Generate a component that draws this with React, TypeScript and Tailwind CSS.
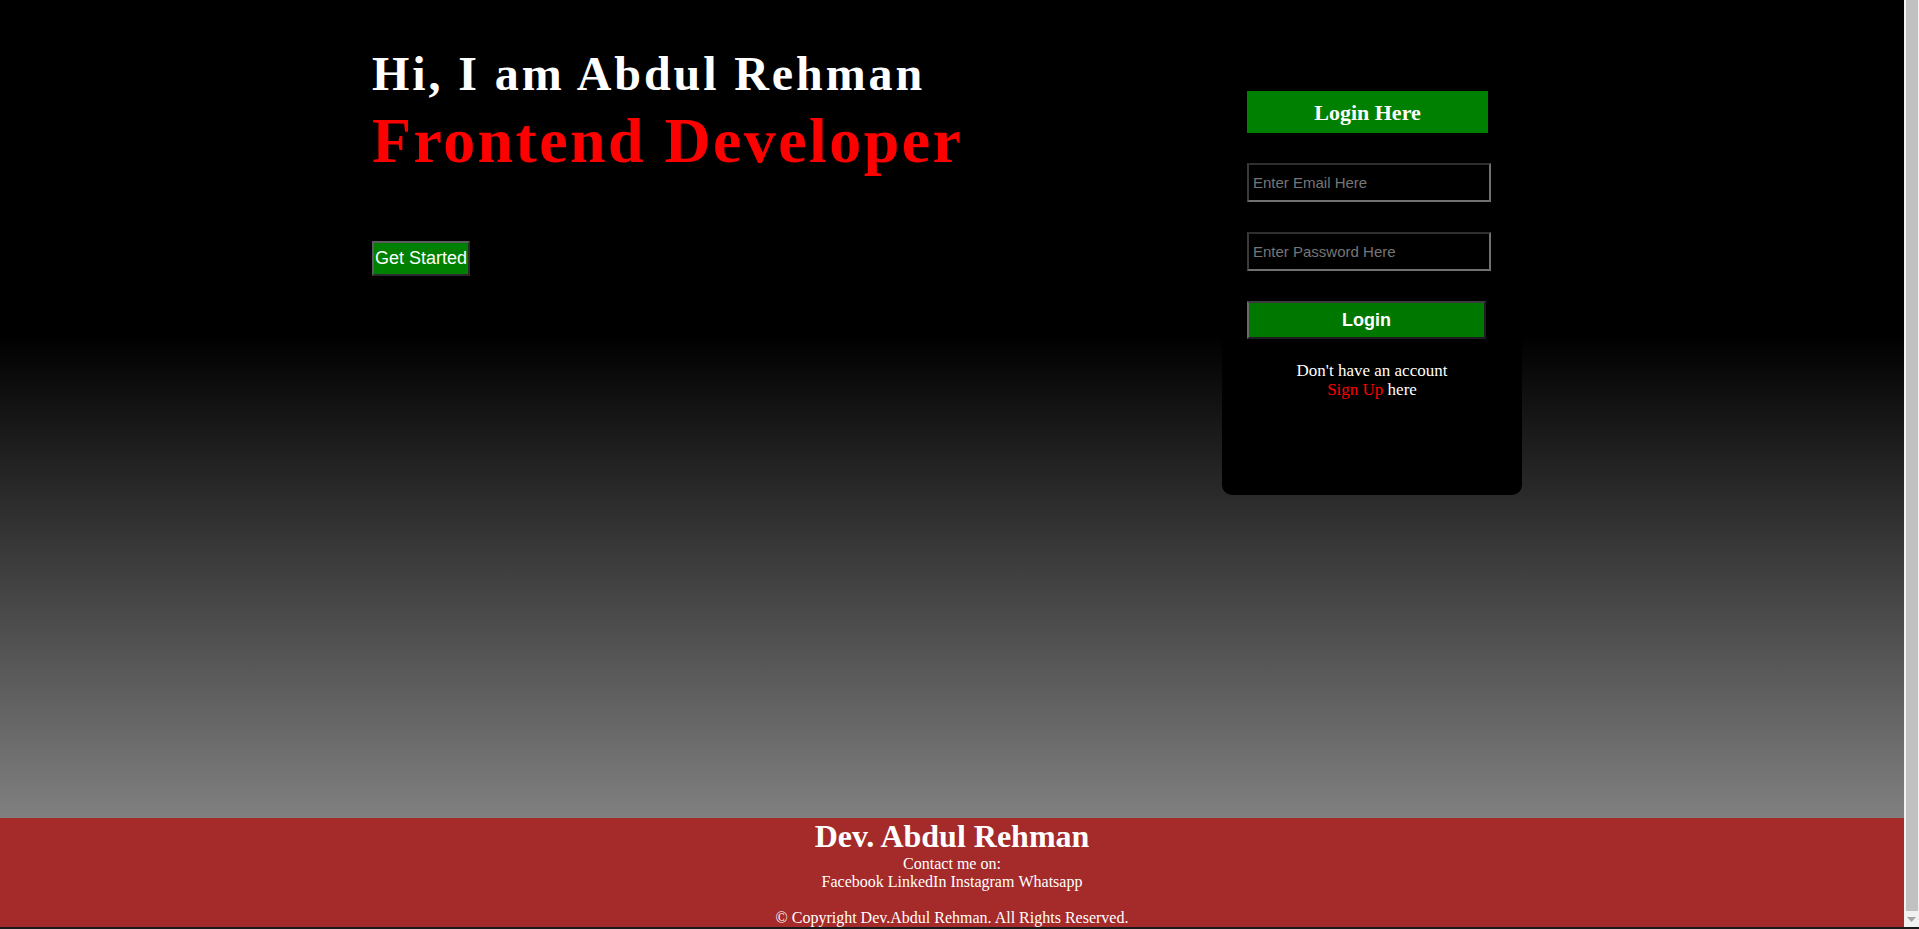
export default function App() {
  return (
    <div className="h-[929px] overflow-hidden flex flex-col bg-[#1a1a1a] font-['Liberation_Serif','Times_New_Roman',serif]">
      <div className="h-[927px] flex">
        <div className="flex-1 overflow-hidden">
          {/* Hero */}
          <section className="h-[818px] bg-[linear-gradient(to_bottom,#000000_41%,#808080_100%)]">
            <div className="w-[1150px] ml-[372px] flex justify-between">
              <div className="pt-[46px]">
                <h1 className="text-[48px] leading-[55px] font-bold text-white tracking-[2.9px]">
                  Hi, I am Abdul Rehman
                </h1>
                <h2 className="mt-[3px] text-[64px] leading-[74px] font-bold text-[#ff0000] tracking-[2.4px]">
                  Frontend Developer
                </h2>
                <button className="mt-[63px] w-[98px] h-[35px] bg-[#008000] border-2 border-t-[#5c5c5c] border-l-[#5c5c5c] border-r-[#2a2a2a] border-b-[#2a2a2a] text-white text-[18px] font-['Liberation_Sans',Arial,sans-serif] flex items-center justify-center">
                  Get Started
                </button>
              </div>

              {/* Login card */}
              <div className="w-[300px] h-[495px] bg-black rounded-b-[10px] pt-[91px]">
                <h2 className="ml-[25px] w-[241px] h-[42px] bg-[#008000] text-white text-[22px] font-bold flex items-center justify-center">
                  Login Here
                </h2>
                <input
                  type="email"
                  placeholder="Enter Email Here"
                  className="block ml-[25px] mt-[30px] w-[244px] h-[39px] px-[4px] bg-black border-2 border-t-[#2e2e2e] border-l-[#3a3a3a] border-r-[#707070] border-b-[#707070] text-white text-[15px] font-['Liberation_Sans',Arial,sans-serif] placeholder:text-[#767676] outline-none"
                />
                <input
                  type="password"
                  placeholder="Enter Password Here"
                  className="block ml-[25px] mt-[30px] w-[244px] h-[39px] px-[4px] bg-black border-2 border-t-[#2e2e2e] border-l-[#3a3a3a] border-r-[#707070] border-b-[#707070] text-white text-[15px] font-['Liberation_Sans',Arial,sans-serif] placeholder:text-[#767676] outline-none"
                />
                <button className="block ml-[25px] mt-[30px] w-[239px] h-[38px] bg-[#007800] border-2 border-t-[#3c3c3c] border-l-[#6a6a6a] border-r-[#1e1e1e] border-b-[#1e1e1e] text-white text-[18px] font-bold font-['Liberation_Sans',Arial,sans-serif]">
                  Login
                </button>
                <p className="mt-[22px] text-center text-white text-[17px] leading-[19px]">
                  Don't have an account
                  <br />
                  <a href="#" className="text-[#ff0000]">Sign Up</a> here
                </p>
              </div>
            </div>
          </section>

          {/* Footer */}
          <footer className="h-[109px] bg-[#a52a2a] text-white text-center">
            <h1 className="text-[32px] leading-[37px] font-bold">Dev. Abdul Rehman</h1>
            <p className="text-[16px] leading-[18px]">Contact me on:</p>
            <div className="text-[16px] leading-[18px] flex justify-center gap-[4px]">
              <a href="#">Facebook</a>
              <a href="#">LinkedIn</a>
              <a href="#">Instagram</a>
              <a href="#">Whatsapp</a>
            </div>
            <p className="mt-[18px] text-[16px] leading-[18px]">
              © Copyright Dev.Abdul Rehman. All Rights Reserved.
            </p>
          </footer>
        </div>

        {/* Scrollbar */}
        <div className="w-[15px] bg-[#f1f1f1] flex flex-col">
          <div className="h-[911px] ml-[2px] mr-[1px] bg-[#c1c1c1]" />
          <div className="flex-1 flex items-center justify-center">
            <svg width="9" height="5" viewBox="0 0 9 5">
              <path d="M0 0 H9 L4.5 5 Z" fill="#a3a3a3" />
            </svg>
          </div>
        </div>
      </div>
      <div className="h-[2px] bg-[#1a1a1a]" />
    </div>
  );
}
